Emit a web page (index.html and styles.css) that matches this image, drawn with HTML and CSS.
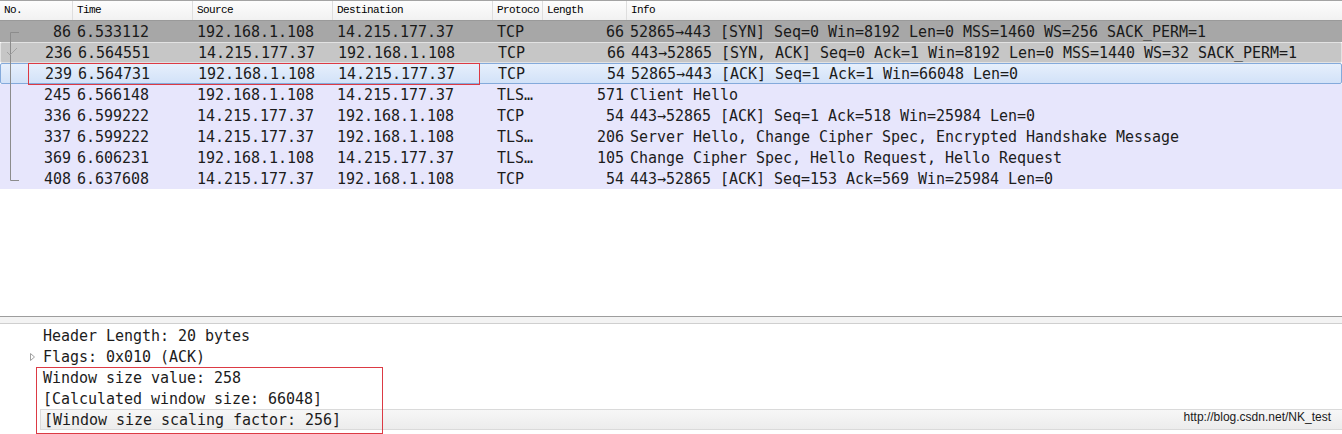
FILE: index.html
```html
<!DOCTYPE html>
<html>
<head>
<meta charset="utf-8">
<link rel="stylesheet" href="styles.css">
</head>
<body>
<div class="packet-list">
  <div class="header">
    <div class="hcell">No.</div>
    <div class="hcell">Time</div>
    <div class="hcell">Source</div>
    <div class="hcell">Destination</div>
    <div class="hcell">Protoco</div>
    <div class="hcell">Length</div>
    <div class="hcell last">Info</div>
  </div>
  <div class="rows">
    <div class="row syn">
      <div class="c num">86</div><div class="c">6.533112</div><div class="c">192.168.1.108</div><div class="c">14.215.177.37</div><div class="c">TCP</div><div class="c len">66</div><div class="c info">52865→443 [SYN] Seq=0 Win=8192 Len=0 MSS=1460 WS=256 SACK_PERM=1</div>
    </div>
    <div class="row synack">
      <div class="c num">236</div><div class="c">6.564551</div><div class="c">14.215.177.37</div><div class="c">192.168.1.108</div><div class="c">TCP</div><div class="c len">66</div><div class="c info">443→52865 [SYN, ACK] Seq=0 Ack=1 Win=8192 Len=0 MSS=1440 WS=32 SACK_PERM=1</div>
    </div>
    <div class="row selected">
      <div class="c num">239</div><div class="c">6.564731</div><div class="c">192.168.1.108</div><div class="c">14.215.177.37</div><div class="c">TCP</div><div class="c len">54</div><div class="c info">52865→443 [ACK] Seq=1 Ack=1 Win=66048 Len=0</div>
    </div>
    <div class="row tcp">
      <div class="c num">245</div><div class="c">6.566148</div><div class="c">192.168.1.108</div><div class="c">14.215.177.37</div><div class="c">TLS…</div><div class="c len">571</div><div class="c info">Client Hello</div>
    </div>
    <div class="row tcp">
      <div class="c num">336</div><div class="c">6.599222</div><div class="c">14.215.177.37</div><div class="c">192.168.1.108</div><div class="c">TCP</div><div class="c len">54</div><div class="c info">443→52865 [ACK] Seq=1 Ack=518 Win=25984 Len=0</div>
    </div>
    <div class="row tcp">
      <div class="c num">337</div><div class="c">6.599222</div><div class="c">14.215.177.37</div><div class="c">192.168.1.108</div><div class="c">TLS…</div><div class="c len">206</div><div class="c info">Server Hello, Change Cipher Spec, Encrypted Handshake Message</div>
    </div>
    <div class="row tcp">
      <div class="c num">369</div><div class="c">6.606231</div><div class="c">192.168.1.108</div><div class="c">14.215.177.37</div><div class="c">TLS…</div><div class="c len">105</div><div class="c info">Change Cipher Spec, Hello Request, Hello Request</div>
    </div>
    <div class="row tcp">
      <div class="c num">408</div><div class="c">6.637608</div><div class="c">14.215.177.37</div><div class="c">192.168.1.108</div><div class="c">TCP</div><div class="c len">54</div><div class="c info">443→52865 [ACK] Seq=153 Ack=569 Win=25984 Len=0</div>
    </div>
  </div>
  <svg class="tree" width="30" height="190" viewBox="0 0 30 190">
    <path d="M19 31.5 H10.5 V179.5 H19" fill="none" stroke="#8c8c8c" stroke-width="1"/>
    <path d="M7 51 L10 54 L17 47" fill="none" stroke="#a2a2a2" stroke-width="1"/>
  </svg>
  <div class="annot box-row"></div>
</div>
<div class="splitter"></div>
<div class="details">
  <div class="drow"><span class="twisty"></span><span>Header Length: 20 bytes</span></div>
  <div class="drow"><span class="twisty"><svg width="7" height="10" viewBox="0 0 7 10"><path d="M1.5 1.5 L5.5 5 L1.5 8.5 Z" fill="none" stroke="#a0a0a0" stroke-width="1"/></svg></span><span>Flags: 0x010 (ACK)</span></div>
  <div class="drow"><span class="twisty"></span><span>Window size value: 258</span></div>
  <div class="drow"><span class="twisty"></span><span>[Calculated window size: 66048]</span></div>
  <div class="drow hl"><span>[Window size scaling factor: 256]</span><span class="mark">http://blog.csdn.net/NK_test</span></div>
</div>
<div class="annot box-detail"></div>
</body>
</html>
```

FILE: styles.css
```css
html, body {
  margin: 0;
  padding: 0;
}
body {
  width: 1342px;
  height: 434px;
  overflow: hidden;
  background: #ffffff;
  position: relative;
  font-family: "DejaVu Sans Mono", "Liberation Mono", monospace;
  font-size: 15px;
  letter-spacing: -0.03px;
  color: #1c1c1c;
}
.packet-list {
  position: relative;
  height: 316px;
  box-sizing: border-box;
  border-top: 1px solid #a3a3a3;
}
.header {
  display: grid;
  grid-template-columns: 73px 120px 140px 160px 50px 84px 1fr;
  height: 20px;
  box-sizing: border-box;
  border-bottom: 1px solid #9a9a9a;
  background: linear-gradient(#fdfdfd, #f1f1f1);
}
.hcell {
  font-family: "Liberation Mono", monospace;
  font-size: 11px;
  letter-spacing: -0.6px;
  line-height: 19px;
  padding-left: 4px;
  border-right: 1px solid #dedede;
  overflow: hidden;
  white-space: nowrap;
  color: #000;
}
.hcell.last {
  border-right: none;
}
.row {
  display: grid;
  grid-template-columns: 73px 120px 140px 160px 50px 84px 1fr;
  height: 21px;
  box-sizing: border-box;
  align-items: center;
  white-space: nowrap;
}
.c {
  padding-left: 4px;
  overflow: hidden;
}
.c.num {
  text-align: right;
  padding-left: 0;
  padding-right: 2px;
}
.c.len {
  text-align: right;
  padding-left: 0;
  padding-right: 3px;
}
.c.info {
  padding-left: 3px;
  overflow: visible;
}
.row.syn {
  background: #a7a7a7;
  color: #1a1a1a;
}
.row.synack {
  background: #c6c6c6;
  border: 1px solid #e2e2e2;
  border-radius: 2px;
  color: #1a1a1a;
}
.row.selected {
  background: linear-gradient(#e6effc, #d2e2f8);
  border: 1px solid #84aadb;
  border-radius: 2px;
}
.row.tcp {
  background: #e7e6fc;
}
.tree {
  position: absolute;
  left: 0;
  top: 0;
}
.annot {
  position: absolute;
  box-sizing: border-box;
  border: 1px solid #dc3a44;
}
.box-row {
  left: 28px;
  top: 62px;
  width: 452px;
  height: 22px;
}
.box-detail {
  left: 36px;
  top: 367px;
  width: 347px;
  height: 67px;
}
.splitter {
  height: 8px;
  box-sizing: border-box;
  border-top: 1px solid #9d9d9d;
  border-bottom: 1px solid #cfcfcf;
  background: #f3f3f3;
}
.details {
  padding-top: 1px;
}
.drow {
  display: flex;
  align-items: center;
  height: 21px;
  padding-left: 29px;
  white-space: nowrap;
}
.twisty {
  width: 14px;
  display: flex;
  align-items: center;
}
.drow.hl {
  margin-left: 40px;
  padding-left: 3px;
  padding-right: 11px;
  box-sizing: border-box;
  justify-content: space-between;
  background: linear-gradient(#f7f7f7, #ececec);
  border-top: 1px solid #dadada;
  border-bottom: 1px solid #dadada;
  border-left: 1px solid #dadada;
}
.mark {
  font-family: "Liberation Sans", Arial, sans-serif;
  font-size: 12px;
  letter-spacing: 0;
  color: #1a1a1a;
  margin-top: -5px;
}
```
